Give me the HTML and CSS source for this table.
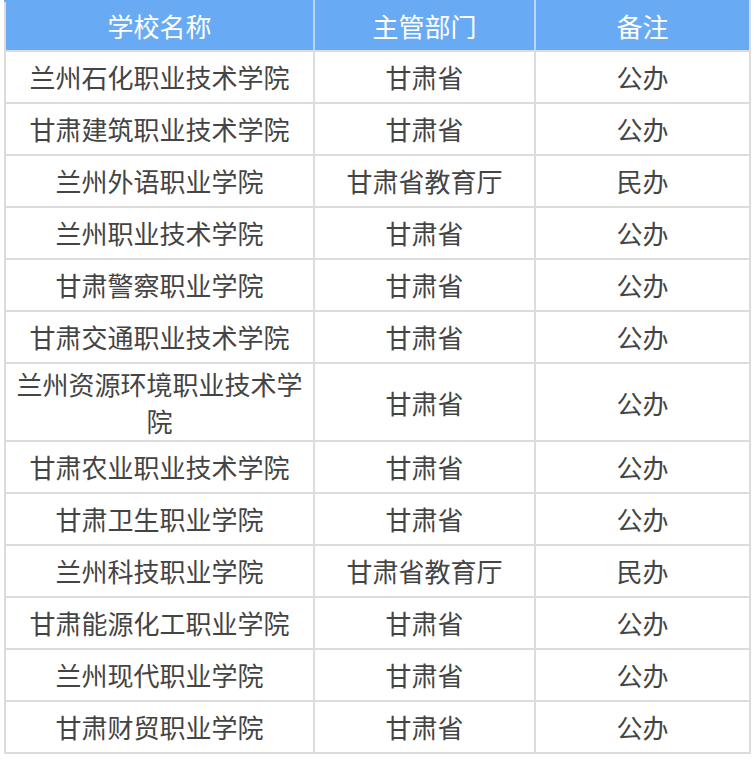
FILE: index.html
```html
<!DOCTYPE html>
<html lang="zh-CN">
<head>
<meta charset="utf-8">
<link rel="stylesheet" href="styles.css">
</head>
<body>
<table class="tbl">
  <colgroup>
    <col class="c1"><col class="c2"><col class="c3">
  </colgroup>
  <thead>
    <tr><th>学校名称</th><th>主管部门</th><th>备注</th></tr>
  </thead>
  <tbody>
    <tr><td>兰州石化职业技术学院</td><td>甘肃省</td><td>公办</td></tr>
    <tr><td>甘肃建筑职业技术学院</td><td>甘肃省</td><td>公办</td></tr>
    <tr><td>兰州外语职业学院</td><td>甘肃省教育厅</td><td>民办</td></tr>
    <tr><td>兰州职业技术学院</td><td>甘肃省</td><td>公办</td></tr>
    <tr><td>甘肃警察职业学院</td><td>甘肃省</td><td>公办</td></tr>
    <tr><td>甘肃交通职业技术学院</td><td>甘肃省</td><td>公办</td></tr>
    <tr class="tall"><td>兰州资源环境职业技术学院</td><td>甘肃省</td><td>公办</td></tr>
    <tr><td>甘肃农业职业技术学院</td><td>甘肃省</td><td>公办</td></tr>
    <tr><td>甘肃卫生职业学院</td><td>甘肃省</td><td>公办</td></tr>
    <tr><td>兰州科技职业学院</td><td>甘肃省教育厅</td><td>民办</td></tr>
    <tr><td>甘肃能源化工职业学院</td><td>甘肃省</td><td>公办</td></tr>
    <tr><td>兰州现代职业学院</td><td>甘肃省</td><td>公办</td></tr>
    <tr><td>甘肃财贸职业学院</td><td>甘肃省</td><td>公办</td></tr>
  </tbody>
</table>
</body>
</html>
```

FILE: styles.css
```css
html, body {
  margin: 0;
  padding: 0;
  background: #ffffff;
}
body {
  padding: 0 6px 0 4px;
  font-family: "Noto Sans CJK SC", "Noto Sans", sans-serif;
}
.tbl {
  border-collapse: collapse;
  width: 745px;
  table-layout: fixed;
  color: #444444;
  font-size: 26px;
}
.c1 { width: 309px; }
.c2 { width: 221px; }
.c3 { width: 215px; }
.tbl th, .tbl td {
  border: 2px solid #dcdcdc;
  text-align: center;
  vertical-align: middle;
  padding: 0 4px;
  height: 50px;
  line-height: 36px;
  font-weight: 400;
}
.tbl th {
  background: #68aaf4;
  color: #ffffff;
  border-color: #68aaf4 #b9d6f8 #dcdcdc #b9d6f8;
  height: 48px;
}
.tbl th:first-child { border-left-color: #dcdcdc; }
.tbl th:last-child { border-right-color: #dcdcdc; }
.tbl .tall td {
  height: 76px;
  line-height: 37px;
}
```
